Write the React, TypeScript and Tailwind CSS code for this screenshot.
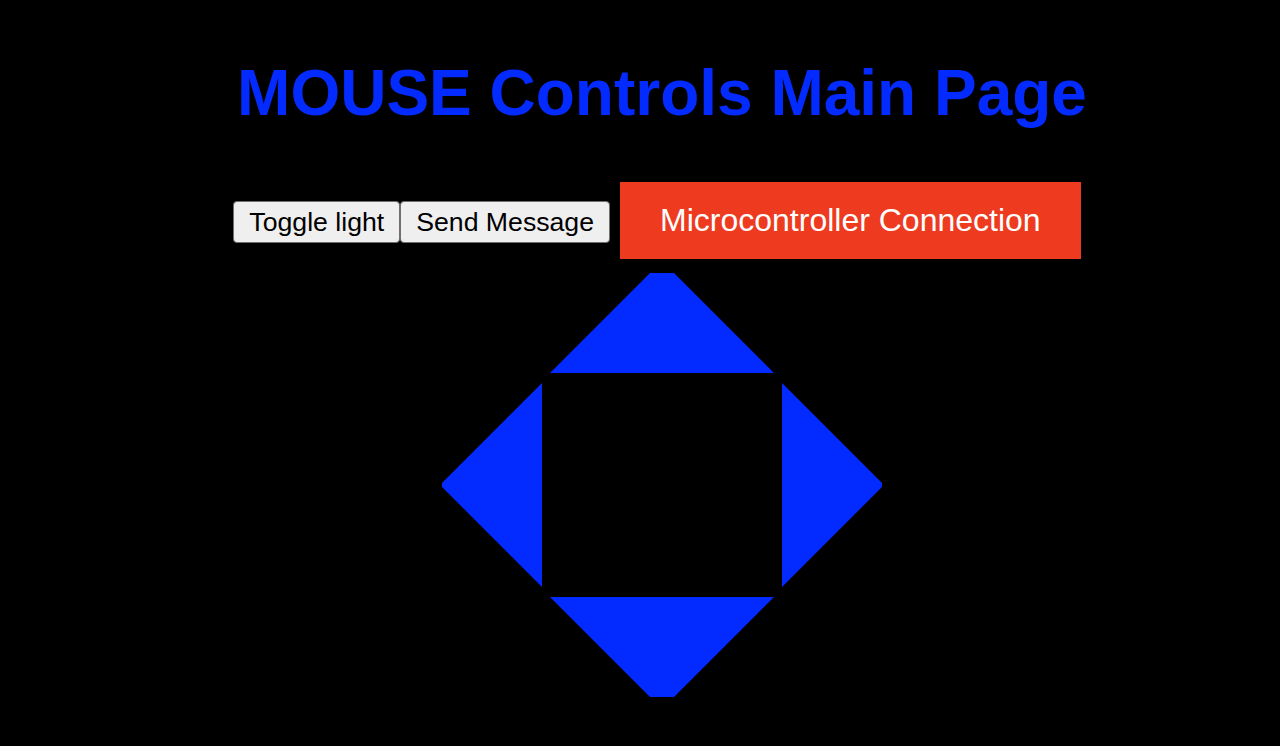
export default function App() {
  return (
    <div className="min-h-screen bg-black pl-[44px] font-['Liberation_Sans',Arial,sans-serif]">
      <h1 className="pt-[56px] text-center text-[64px] font-bold leading-[74px] text-[#032bff]">
        MOUSE Controls Main Page
      </h1>

      {/* buttons row */}
      <div className="mt-[42px] flex items-baseline justify-center">
        <button className="rounded-[4px] border border-[#6f6f6f] bg-[#efefef] px-[15px] py-[5px] text-[26.67px] leading-[30px] text-black">
          Toggle light
        </button>
        <button className="rounded-[4px] border border-[#6f6f6f] bg-[#efefef] px-[15px] py-[5px] text-[26.67px] leading-[30px] text-black">
          Send Message
        </button>
        <button className="m-[10px] bg-[#ee3a1f] px-10 py-5 text-[32px] leading-[37px] text-white">
          Microcontroller Connection
        </button>
      </div>

      {/* d-pad */}
      <div className="mt-[4px] flex flex-col items-center gap-[10px]">
        <div className="box-content h-0 w-[24px] border-x-[100px] border-b-[100px] border-x-transparent border-b-[#032bff]" />
        <div className="flex items-center gap-[240px]">
          <div className="box-content h-[4px] w-0 border-y-[100px] border-r-[100px] border-y-transparent border-r-[#032bff]" />
          <div className="box-content h-[4px] w-0 border-y-[100px] border-l-[100px] border-y-transparent border-l-[#032bff]" />
        </div>
        <div className="box-content h-0 w-[24px] border-x-[100px] border-t-[100px] border-x-transparent border-t-[#032bff]" />
      </div>
    </div>
  );
}
